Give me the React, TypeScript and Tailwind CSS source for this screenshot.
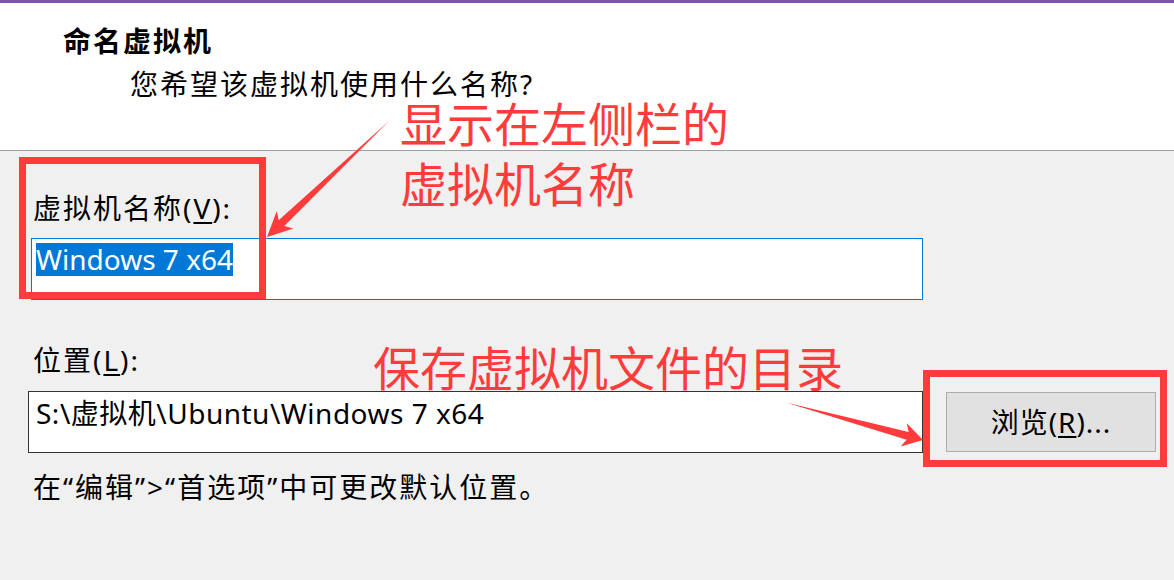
import React from "react";

const RED = "#ff3b3b";

const Acc = ({ ch }: { ch: string }) => (
  <span className="underline underline-offset-[3px] decoration-[2px]">{ch}</span>
);

const Arrows = () => (
  <svg
    className="pointer-events-none absolute left-0 top-0"
    width={1174}
    height={580}
    viewBox="0 0 1174 580"
  >
    {/* arrow to name box */}
    <polygon
      fill={RED}
      points="389,121 284.3,226.1 293.4,228.5 267,237 276.8,211.1 278.7,220.3"
    />
    {/* arrow to browse button */}
    <polygon
      fill={RED}
      points="786,402.5 908.6,431.9 906.8,423.2 923,440 900.6,446.4 906.6,439.7"
    />
  </svg>
);

const App = () => {
  return (
    <div className="relative flex h-[580px] w-[1174px] flex-col overflow-hidden bg-[#f0f0f0] font-['Noto_Sans','Noto_Sans_CJK_SC',sans-serif] text-black">
      <div className="h-[3px] bg-[#7b53b3]" />

      {/* header */}
      <div className="h-[148px] border-b border-[#a0a0a0] bg-white pl-[63px] pt-[20px] tracking-[2px]">
        <p className="text-[28px] font-bold leading-[36px]">命名虚拟机</p>
        <p className="mt-[7px] pl-[67px] text-[28px] leading-[36px]">
          您希望该虚拟机使用什么名称?
        </p>
      </div>

      {/* body */}
      <div className="flex flex-col pl-[28px] pt-[39px] text-[28px] leading-[36px] tracking-[2px]">
        <p className="pl-[5px]">
          虚拟机名称(<Acc ch="V" />):
        </p>
        <div className="ml-[3px] mt-[12px] h-[62px] w-[892px] border border-[#0078d7] bg-white pl-[4px] pt-[2px] tracking-normal">
          <span className="inline-block bg-[#0078d7] leading-[33px] text-white">
            Windows 7 x64
          </span>
        </div>

        <p className="mt-[42px] pl-[5px]">
          位置(<Acc ch="L" />):
        </p>
        <div className="mt-[13px] flex items-start gap-[23px]">
          <div className="h-[62px] w-[895px] border border-[#333333] bg-white px-[7px] pt-[3px] tracking-[0.5px]">
            S:\虚拟机\Ubuntu\Windows 7 x64
          </div>
          <button className="mt-[1px] flex h-[60px] w-[210px] items-center justify-center border border-[#adadad] bg-[#e1e1e1] tracking-[1px]">
            浏览(<Acc ch="R" />)...
          </button>
        </div>

        <p className="mt-[16px] pl-[5px]">在“编辑”&gt;“首选项”中可更改默认位置。</p>
      </div>

      {/* annotations */}
      <div className="absolute left-[19px] top-[157px] h-[142px] w-[247px] border-[7px] border-[#ff3b3b]" />
      <div className="absolute left-[923px] top-[370px] h-[97px] w-[244px] border-[7px] border-[#ff3b3b]" />
      <div className="absolute left-[400px] top-[94px] text-[47px] leading-[60px] text-[#ff3b3b]">
        <p>显示在左侧栏的</p>
        <p>虚拟机名称</p>
      </div>
      <div className="absolute left-[373px] top-[338px] text-[47px] leading-[60px] text-[#ff3b3b]">
        保存虚拟机文件的目录
      </div>
      <Arrows />
    </div>
  );
};

export default App;
